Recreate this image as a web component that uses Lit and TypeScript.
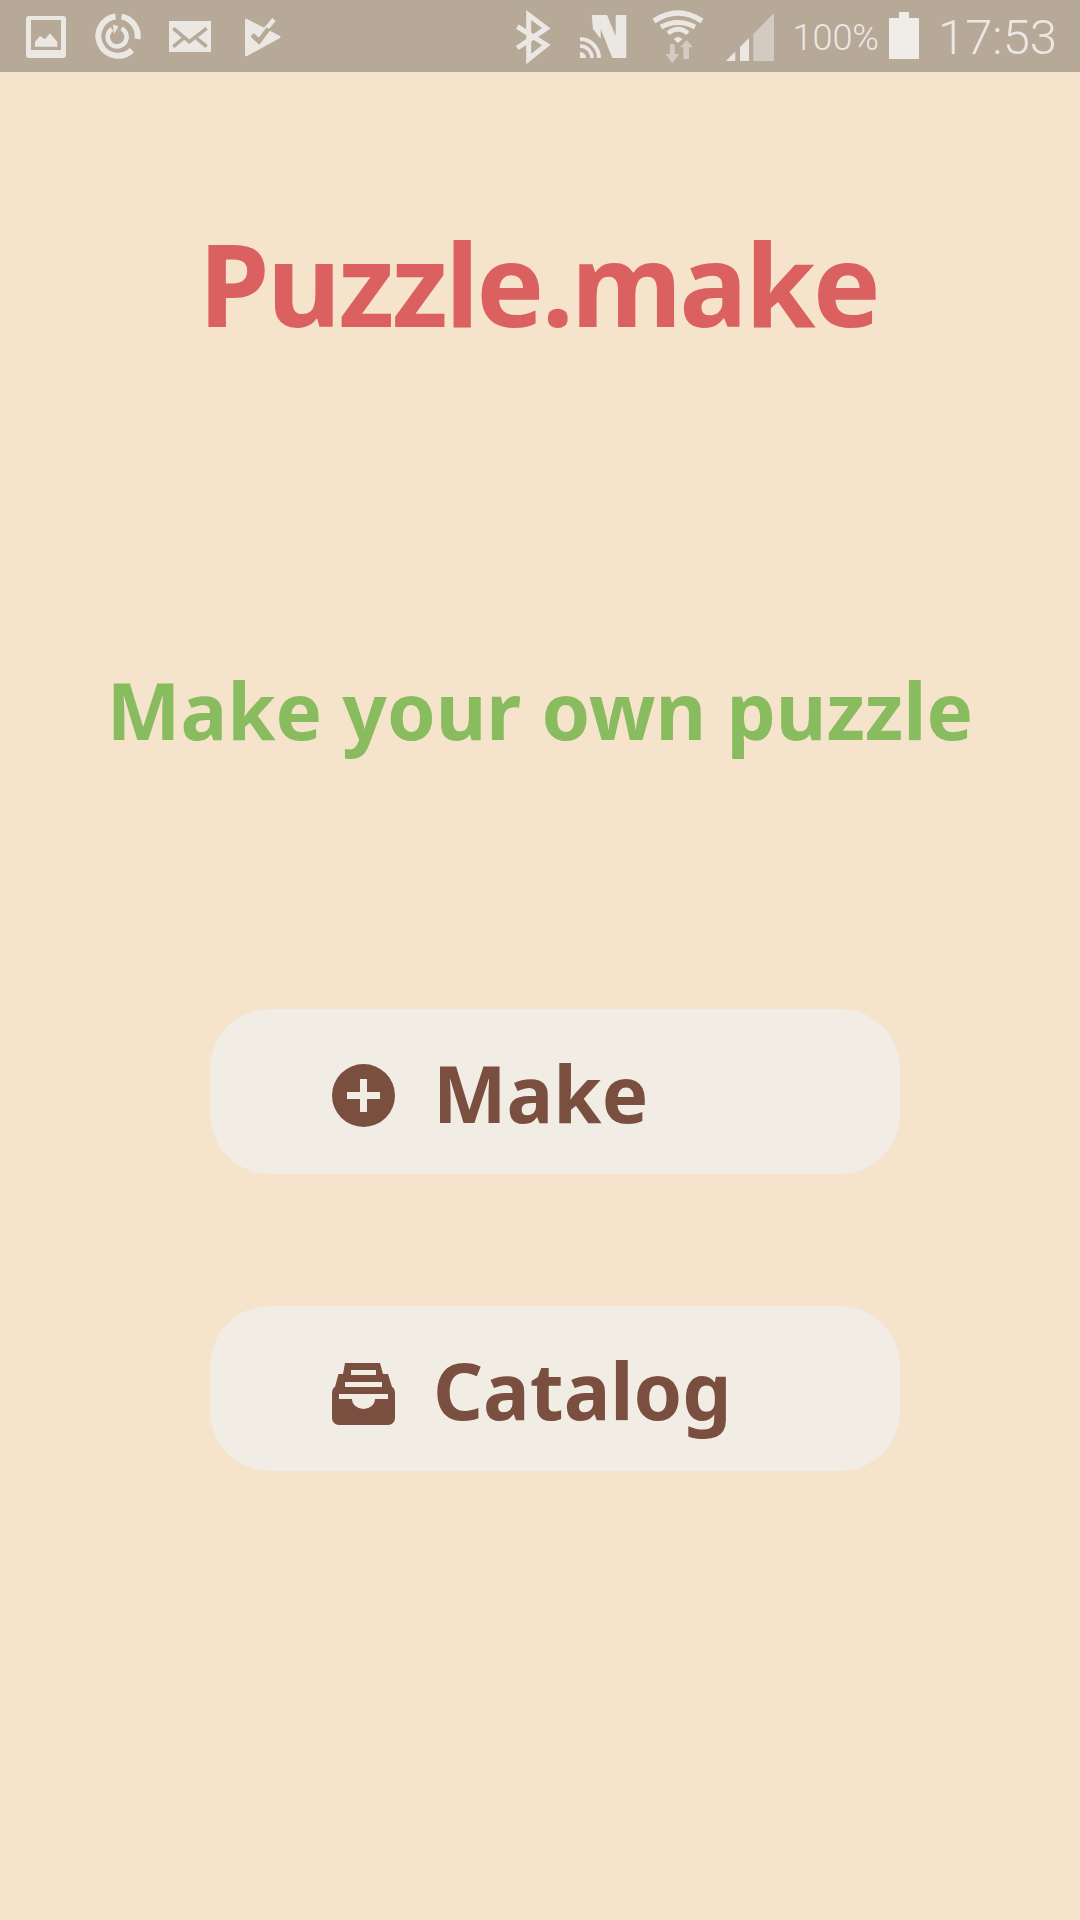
import { LitElement, css, html, svg } from "lit";
import { customElement } from "lit/decorators.js";

const statusIcon = (w: number, h: number, body: unknown, cls = "") =>
  html`<svg class=${cls} width=${w} height=${h} viewBox="0 0 ${w} ${h}">${body}</svg>`;

const imageIcon = svg`<path fill-rule="evenodd" d="M3 0h34a3 3 0 0 1 3 3v36a3 3 0 0 1-3 3H3a3 3 0 0 1-3-3V3a3 3 0 0 1 3-3zM5 4v30h30V4zM9 25.7L14 20l5 3.3 5-6 7.3 8.4v5H9z"/>`;

const timerIcon = svg`
  <g class="lit" fill="none" stroke-width="6">
    <path d="M20.5 2.5A19.7 19.7 0 1 0 37 36"/>
    <path d="M26.5 2.6A19.7 19.7 0 0 1 42.5 25"/>
  </g>
  <path class="lit" fill="none" stroke-width="4.5" d="M26.5 14.5A9.5 9.5 0 1 1 17 15"/>
  <path d="M18 10.5l5.5 2-4.5 7.5z"/>`;

const mailIcon = svg`
  <rect width="42" height="31"/>
  <path d="M4.3 7.3l16 13.4 17.4-13.4M4.3 25.7l10-8.4M37.7 25.7l-10-8.4" fill="none" stroke="#b7a998" stroke-width="3.5"/>`;

const playIcon = svg`
  <path d="M0 1.5Q0 0 2 1L35 18Q36 19 35 20L2 38Q0 39 0 37z"/>
  <path d="M7.3 16.7l6.7 6.3L24 10" fill="none" stroke="#b7a998" stroke-width="4.5"/>
  <path class="lit" d="M20.5 11.5L29 1.5" fill="none" stroke-width="4.5"/>
  <path d="M8 18l6 5.5 9.5-13" fill="none" stroke="#b7a998" stroke-width="4.5"/>`;

const bluetoothIcon = svg`<path class="lit" d="M2.3 13.7L31.3 32 13.7 46V2l17.6 13.3L2.3 35" fill="none" stroke-width="5"/>`;

const nfcIcon = svg`
  <path d="M11.7 0H27l8.7 21V0h10.6v43H32.3L20.7 14v10L13 14z"/>
  <g class="lit" fill="none">
    <path stroke-width="4" d="M0 24A19 19 0 0 1 19 43"/>
    <path stroke-width="3.5" d="M0 31A12 12 0 0 1 12 43"/>
  </g>
  <path d="M0 37A6 6 0 0 1 6 43H0z"/>`;

const wifiIcon = svg`
  <g class="lit" fill="none">
    <path stroke-width="5.5" d="M1 11Q25 -5 49 11"/>
    <path stroke-width="5" d="M8 17Q25 8 42 17"/>
    <path stroke-width="4.5" d="M15 23.3Q25 15 35 23.3"/>
  </g>
  <path d="M20.5 29l4.5-2.3L29.5 29l-4.5 4z"/>
  <path opacity=".55" d="M17 34h4.7v10H26l-6.7 9.3L12.7 44H17zM33.7 30l6.3 7.3h-4V49h-5.7V37.3H27z"/>`;

const signalIcon = svg`
  <path opacity=".55" d="M27.3 21L48 0v48H27.3z"/>
  <path d="M0 48L9.3 38.5V48zM14 34l9-9v23h-9z"/>`;

const batteryIcon = svg`
  <path fill="#f0ede8" d="M10 0h10v6h10v41H0V6h10z"/>`;

@customElement("app-root")
export class AppRoot extends LitElement {
  static styles = css`
    :host {
      display: block;
      width: 1080px;
      height: 1920px;
      background: #f5e3cb;
      font-family: "Noto Sans", sans-serif;
      overflow: hidden;
    }

    .status {
      display: flex;
      align-items: flex-start;
      height: 72px;
      background: #b7a998;
      color: #ebe8e3;
      fill: #ebe8e3;
      font-family: Roboto, sans-serif;
      font-weight: 300;
    }

    .status svg {
      display: block;
      flex: none;
      overflow: visible;
    }

    .status .lit {
      stroke: #ebe8e3;
    }

    .left {
      display: flex;
      padding-left: 26px;
    }

    .right {
      display: flex;
      margin-left: auto;
      padding-right: 23px;
    }

    .i1 {
      margin-top: 16px;
    }
    .i2 {
      margin: 14px 0 0 29px;
    }
    .i3 {
      margin: 21px 0 0 27px;
    }
    .i4 {
      margin: 18px 0 0 34px;
    }
    .i5 {
      margin-top: 13px;
    }
    .i6 {
      margin: 15px 0 0 32px;
    }
    .i7 {
      margin: 10px 0 0 26px;
    }
    .i8 {
      margin: 13px 0 0 23px;
    }
    .i9 {
      margin-top: 12px;
    }

    .pct {
      font-size: 36px;
      line-height: 76px;
      margin: 0 10px 0 18px;
    }

    .time {
      font-size: 49px;
      line-height: 76px;
      margin-left: 19px;
    }

    h1,
    h2 {
      margin: 0;
      text-align: center;
      font-weight: 700;
    }

    h1 {
      margin-top: 137px;
      padding-right: 3px;
      font-size: 114px;
      line-height: 148px;
      letter-spacing: -2.75px;
      color: #db6060;
    }

    h2 {
      margin-top: 300px;
      font-size: 78px;
      line-height: 106px;
      color: #88bc5e;
    }

    .actions {
      display: flex;
      flex-direction: column;
      gap: 132px;
      margin: 246px 0 0 210px;
      width: 690px;
    }

    .btn {
      display: flex;
      align-items: center;
      gap: 38px;
      box-sizing: border-box;
      height: 165px;
      padding-left: 122px;
      border-radius: 60px;
      background: #f1ece4;
      color: #7b4f40;
      font-size: 78px;
      font-weight: 700;
    }

    .btn span {
      margin-top: 2px;
    }

    .btn svg {
      display: block;
      fill: #7b4f40;
      flex: none;
    }

    .plus {
      margin-top: 8px;
    }

    .tray {
      margin-top: 10px;
    }
  `;

  render() {
    return html`
      <div class="status">
        <div class="left">
          ${statusIcon(40, 42, imageIcon, "i1")}
          ${statusIcon(47, 46, timerIcon, "i2")}
          ${statusIcon(42, 31, mailIcon, "i3")}
          ${statusIcon(36, 39, playIcon, "i4")}
        </div>
        <div class="right">
          ${statusIcon(33, 48, bluetoothIcon, "i5")}
          ${statusIcon(47, 43, nfcIcon, "i6")}
          ${statusIcon(50, 54, wifiIcon, "i7")}
          ${statusIcon(48, 48, signalIcon, "i8")}
          <span class="pct">100%</span>
          ${statusIcon(30, 47, batteryIcon, "i9")}
          <span class="time">17:53</span>
        </div>
      </div>
      <h1>Puzzle.make</h1>
      <h2>Make your own puzzle</h2>
      <div class="actions">
        <div class="btn">
          <svg class="plus" width="63" height="63" viewBox="0 0 63 63">
            <path fill-rule="evenodd" d="M31.5 0a31.5 31.5 0 1 1 0 63a31.5 31.5 0 1 1 0-63zM28 15v13H15v7h13v13h7V35h13v-7H35V15z" />
          </svg>
          <span>Make</span>
        </div>
        <div class="btn">
          <svg class="tray" width="63" height="62" viewBox="0 0 63 62">
            <path fill-rule="evenodd" d="M13 0H48L51 11H56L60 24Q63 25 63 31V55a7 7 0 0 1-7 7H7a7 7 0 0 1-7-7V31Q0 25 3 24L6.5 11H11zM19 7v5h25V7zM13 19v5h37v-5zM7 31v5h13a11.5 10 0 0 0 23 0h13v-5z" />
          </svg>
          <span>Catalog</span>
        </div>
      </div>
    `;
  }
}
